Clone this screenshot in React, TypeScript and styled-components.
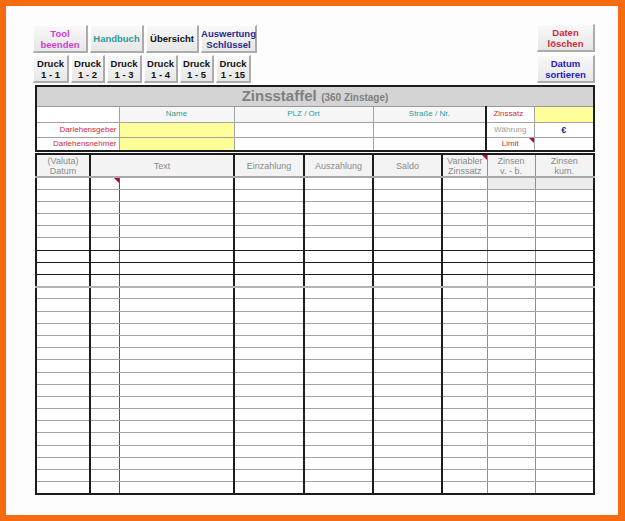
import React from 'react';
import styled, { createGlobalStyle } from 'styled-components';

const Global = createGlobalStyle`
  html, body { margin: 0; padding: 0; }
  body { font-family: "Liberation Sans", Arial, sans-serif; }
  * { box-sizing: border-box; }
`;

const Frame = styled.div`
  width: 625px;
  height: 521px;
  background: #f66a10;
  padding: 6px 7px 6px 6px;
`;

const Page = styled.div`
  height: 100%;
  background: #fdfdfd;
  padding: 18px 0 0 27px;
`;

const Content = styled.div`
  width: 562px;
`;

const Toolbar = styled.div`
  display: flex;
  justify-content: space-between;
  align-items: flex-start;
`;

const ButtonStack = styled.div<{ $gap: number; $top: number }>`
  display: flex;
  flex-direction: column;
  align-items: flex-start;
  gap: ${(p) => p.$gap}px;
  margin-top: ${(p) => p.$top}px;
`;

const ButtonRow = styled.div`
  display: flex;
  gap: 2px;
`;

const Btn = styled.button<{ $w: number; $c: string }>`
  width: ${(p) => p.$w}px;
  height: 28px;
  margin: 0;
  padding: 0;
  display: flex;
  align-items: center;
  justify-content: center;
  text-align: center;
  white-space: pre-line;
  font-family: "Liberation Sans", Arial, sans-serif;
  font-weight: bold;
  font-size: 9.5px;
  line-height: 11px;
  color: ${(p) => p.$c};
  background: linear-gradient(#f8f8f8, #e7e7e7);
  border: none;
  border-top: 1px solid #ffffff;
  border-left: 1px solid #ffffff;
  border-right: 2px solid #ababab;
  border-bottom: 2px solid #ababab;
`;

const Sheet = styled.div`
  margin: 2px 0 0 2px;
  width: 560px;
  display: flex;
  flex-direction: column;
  gap: 1px;
`;

const Table = styled.table`
  width: 560px;
  table-layout: fixed;
  border-collapse: collapse;
  border: 2px solid #1c1c1c;
  font-family: "Liberation Sans", Arial, sans-serif;
`;

const TitleCell = styled.td`
  height: 20px;
  padding: 0;
  background: #d4d4d4;
  border-bottom: 1px solid #9a9a9a;
  text-align: center;
  color: #7f7f7f;
  font-weight: bold;
  white-space: nowrap;
`;

const TitleMain = styled.span`
  font-size: 15px;
`;

const TitleSub = styled.span`
  font-size: 10px;
`;

const InfoCell = styled.td<{
  $h: number;
  $bg?: string;
  $c?: string;
  $align?: string;
  $thick?: boolean;
  $bold?: boolean;
  $size?: number;
}>`
  position: relative;
  height: ${(p) => p.$h}px;
  padding: 0 2px;
  background: ${(p) => p.$bg || '#ffffff'};
  color: ${(p) => p.$c || '#333'};
  text-align: ${(p) => p.$align || 'center'};
  font-size: ${(p) => p.$size || 8}px;
  font-weight: ${(p) => (p.$bold ? 'bold' : 'normal')};
  border: 1px solid #a3a3a3;
  border-left: ${(p) => (p.$thick ? '2px solid #1c1c1c' : '1px solid #a3a3a3')};
  white-space: nowrap;
  overflow: hidden;
  line-height: 10px;
`;

const HeadCell = styled.td<{ $left: string }>`
  position: relative;
  height: 23px;
  padding: 0;
  background: #f3f3f3;
  color: #8a8a8a;
  font-size: 9px;
  line-height: 10px;
  text-align: center;
  white-space: pre-line;
  border-left: ${(p) => p.$left};
  border-bottom: 2px solid #a9a9a9;
`;

const BodyCell = styled.td<{ $left: string; $bottom: string; $bg?: string }>`
  position: relative;
  height: 12.2px;
  padding: 0;
  background: ${(p) => p.$bg || '#ffffff'};
  border-left: ${(p) => p.$left};
  border-bottom: ${(p) => p.$bottom};
`;

const Marker = styled.span`
  position: absolute;
  top: 0;
  right: 0;
  width: 0;
  height: 0;
  border-top: 5px solid #a8102c;
  border-left: 5px solid transparent;
`;

const THICK = '2px solid #1c1c1c';
const THIN_DARK = '1px solid #555555';
const THIN_GRAY = '1px solid #8e8e8e';

const infoCols = [83, 115, 139, 113, 48, 60];
const mainCols = [54, 29, 115, 70, 69, 69, 45, 48, 59];
const mainLefts = [THICK, THICK, THIN_DARK, THICK, THICK, THICK, THICK, THIN_GRAY, THIN_GRAY];

const headers: { text: string; span: number; col: number; marker?: boolean }[] = [
  { text: '(Valuta)\nDatum', span: 1, col: 0 },
  { text: 'Text', span: 2, col: 1 },
  { text: 'Einzahlung', span: 1, col: 3 },
  { text: 'Auszahlung', span: 1, col: 4 },
  { text: 'Saldo', span: 1, col: 5 },
  { text: 'Variabler\nZinssatz', span: 1, col: 6, marker: true },
  { text: 'Zinsen\nv. - b.', span: 1, col: 7 },
  { text: 'Zinsen\nkum.', span: 1, col: 8 },
];

const ROWS = 26;

const rowBottom = (r: number) => {
  if (r === ROWS - 1) return '1px solid #a0a0a0';
  if (r >= 5 && r <= 7) return '1px solid #1c1c1c';
  if (r === 8) return '2px solid #b3b3b3';
  return '1px solid #a3a3a3';
};

const topButtons = [
  { t: 'Tool\nbeenden', w: 55, c: '#d23cd2' },
  { t: 'Handbuch', w: 54, c: '#2f9a96' },
  { t: 'Übersicht', w: 53, c: '#111111' },
  { t: 'Auswertung\nSchlüssel', w: 56, c: '#2b2b8a' },
];

const printButtons = [
  { t: 'Druck\n1 - 1', w: 36 },
  { t: 'Druck\n1 - 2', w: 34 },
  { t: 'Druck\n1 - 3', w: 35 },
  { t: 'Druck\n1 - 4', w: 34 },
  { t: 'Druck\n1 - 5', w: 34 },
  { t: 'Druck\n1 - 15', w: 35 },
];

export default function App() {
  return (
    <>
      <Global />
      <Frame>
        <Page>
          <Content>
            <Toolbar>
              <ButtonStack $gap={2} $top={1}>
                <ButtonRow>
                  {topButtons.map((b) => (
                    <Btn key={b.t} $w={b.w} $c={b.c}>
                      {b.t}
                    </Btn>
                  ))}
                </ButtonRow>
                <ButtonRow>
                  {printButtons.map((b) => (
                    <Btn key={b.t} $w={b.w} $c="#111111">
                      {b.t}
                    </Btn>
                  ))}
                </ButtonRow>
              </ButtonStack>
              <ButtonStack $gap={3} $top={0}>
                <Btn $w={58} $c="#cc2b3a">
                  {'Daten\nlöschen'}
                </Btn>
                <Btn $w={58} $c="#2222bb">
                  {'Datum\nsortieren'}
                </Btn>
              </ButtonStack>
            </Toolbar>

            <Sheet>
              <Table>
                <colgroup>
                  {infoCols.map((w, i) => (
                    <col key={i} style={{ width: w }} />
                  ))}
                </colgroup>
                <tbody>
                  <tr>
                    <TitleCell colSpan={6}>
                      <TitleMain>Zinsstaffel</TitleMain> <TitleSub>(360 Zinstage)</TitleSub>
                    </TitleCell>
                  </tr>
                  <tr>
                    <InfoCell $h={16} />
                    <InfoCell $h={16} $bg="#f6f6f6" $c="#2f9a96">Name</InfoCell>
                    <InfoCell $h={16} $bg="#f6f6f6" $c="#2f9a96">PLZ / Ort</InfoCell>
                    <InfoCell $h={16} $bg="#f6f6f6" $c="#2f9a96">Straße / Nr.</InfoCell>
                    <InfoCell $h={16} $thick $c="#cc2b3a" $align="left">&nbsp;&nbsp;Zinssatz</InfoCell>
                    <InfoCell $h={16} $bg="#ffff99" />
                  </tr>
                  <tr>
                    <InfoCell $h={15} $c="#cc2b3a" $align="right">Darlehensgeber</InfoCell>
                    <InfoCell $h={15} $bg="#ffff99" />
                    <InfoCell $h={15} />
                    <InfoCell $h={15} />
                    <InfoCell $h={15} $thick $c="#9a9a9a">Währung</InfoCell>
                    <InfoCell $h={15} $c="#1f1f8a" $bold $size={9}>€</InfoCell>
                  </tr>
                  <tr>
                    <InfoCell $h={14} $c="#cc2b3a" $align="right">Darlehensnehmer</InfoCell>
                    <InfoCell $h={14} $bg="#ffff99" />
                    <InfoCell $h={14} />
                    <InfoCell $h={14} />
                    <InfoCell $h={14} $thick $c="#cc2b3a">
                      Limit
                      <Marker />
                    </InfoCell>
                    <InfoCell $h={14} />
                  </tr>
                </tbody>
              </Table>

              <Table>
                <colgroup>
                  {mainCols.map((w, i) => (
                    <col key={i} style={{ width: w }} />
                  ))}
                </colgroup>
                <tbody>
                  <tr>
                    {headers.map((h) => (
                      <HeadCell key={h.text} colSpan={h.span} $left={mainLefts[h.col]}>
                        {h.text}
                        {h.marker && <Marker />}
                      </HeadCell>
                    ))}
                  </tr>
                  {Array.from({ length: ROWS }).map((_, r) => (
                    <tr key={r}>
                      {mainCols.map((_, c) => (
                        <BodyCell
                          key={c}
                          $left={mainLefts[c]}
                          $bottom={rowBottom(r)}
                          $bg={r === 0 && c >= 7 ? '#ececec' : undefined}
                        >
                          {r === 0 && c === 1 && <Marker />}
                        </BodyCell>
                      ))}
                    </tr>
                  ))}
                </tbody>
              </Table>
            </Sheet>
          </Content>
        </Page>
      </Frame>
    </>
  );
}
